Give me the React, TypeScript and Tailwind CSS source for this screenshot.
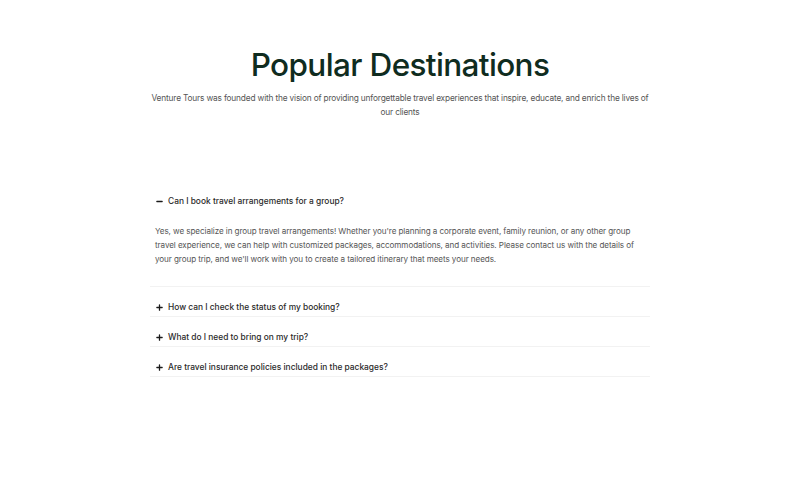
import { useState } from 'react';
import { Plus, Minus } from 'lucide-react';

const faqs = [
  {
    q: 'Can I book travel arrangements for a group?',
    a: "Yes, we specialize in group travel arrangements! Whether you're planning a corporate event, family reunion, or any other group travel experience, we can help with customized packages, accommodations, and activities. Please contact us with the details of your group trip, and we'll work with you to create a tailored itinerary that meets your needs.",
  },
  { q: 'How can I check the status of my booking?', a: 'You can check the status of your booking by logging into your account.' },
  { q: 'What do I need to bring on my trip?', a: 'We will send you a packing list before your departure.' },
  { q: 'Are travel insurance policies included in the packages?', a: 'Travel insurance can be added to any package at checkout.' },
];

export default function App() {
  const [open, setOpen] = useState<number | null>(0);

  return (
    <div className="min-h-screen bg-white font-['Inter',sans-serif]">
      <div className="mx-auto w-[500px] pt-[45px]">
        {/* Header */}
        <h1 className="text-center text-[31.5px] leading-[40px] font-[450] tracking-[-0.02em] text-[#0f2c20]">
          Popular Destinations
        </h1>
        <p className="-mx-[8px] mt-[6px] text-center text-[8.3px] leading-[14px] tracking-[-0.02em] text-[#555]">
          Venture Tours was founded with the vision of providing unforgettable travel experiences that inspire, educate, and enrich the lives of
          <br />
          our clients
        </p>

        {/* FAQ */}
        <div className="mt-[62px]">
          {faqs.map((item, i) => {
            const isOpen = open === i;
            return (
              <div key={i} className="border-b border-[#f2f2f2]">
                <button
                  onClick={() => setOpen(isOpen ? null : i)}
                  className={`flex w-full items-center gap-[4px] px-[5px] pt-[13px] text-left text-[8.4px] leading-[14px] font-medium text-[#2a2a2a] ${isOpen ? 'pb-0' : 'pb-[2px]'}`}
                >
                  {isOpen ? (
                    <Minus size={9} strokeWidth={3.5} className="text-[#1a1a1a]" />
                  ) : (
                    <Plus size={9} strokeWidth={3.5} className="text-[#1a1a1a]" />
                  )}
                  <span>{item.q}</span>
                </button>
                {isOpen && (
                  <p className="px-[5px] pt-[16px] pb-[20px] text-[8.1px] leading-[14px] tracking-[-0.01em] text-[#555]">
                    {item.a}
                  </p>
                )}
              </div>
            );
          })}
        </div>
      </div>
    </div>
  );
}
